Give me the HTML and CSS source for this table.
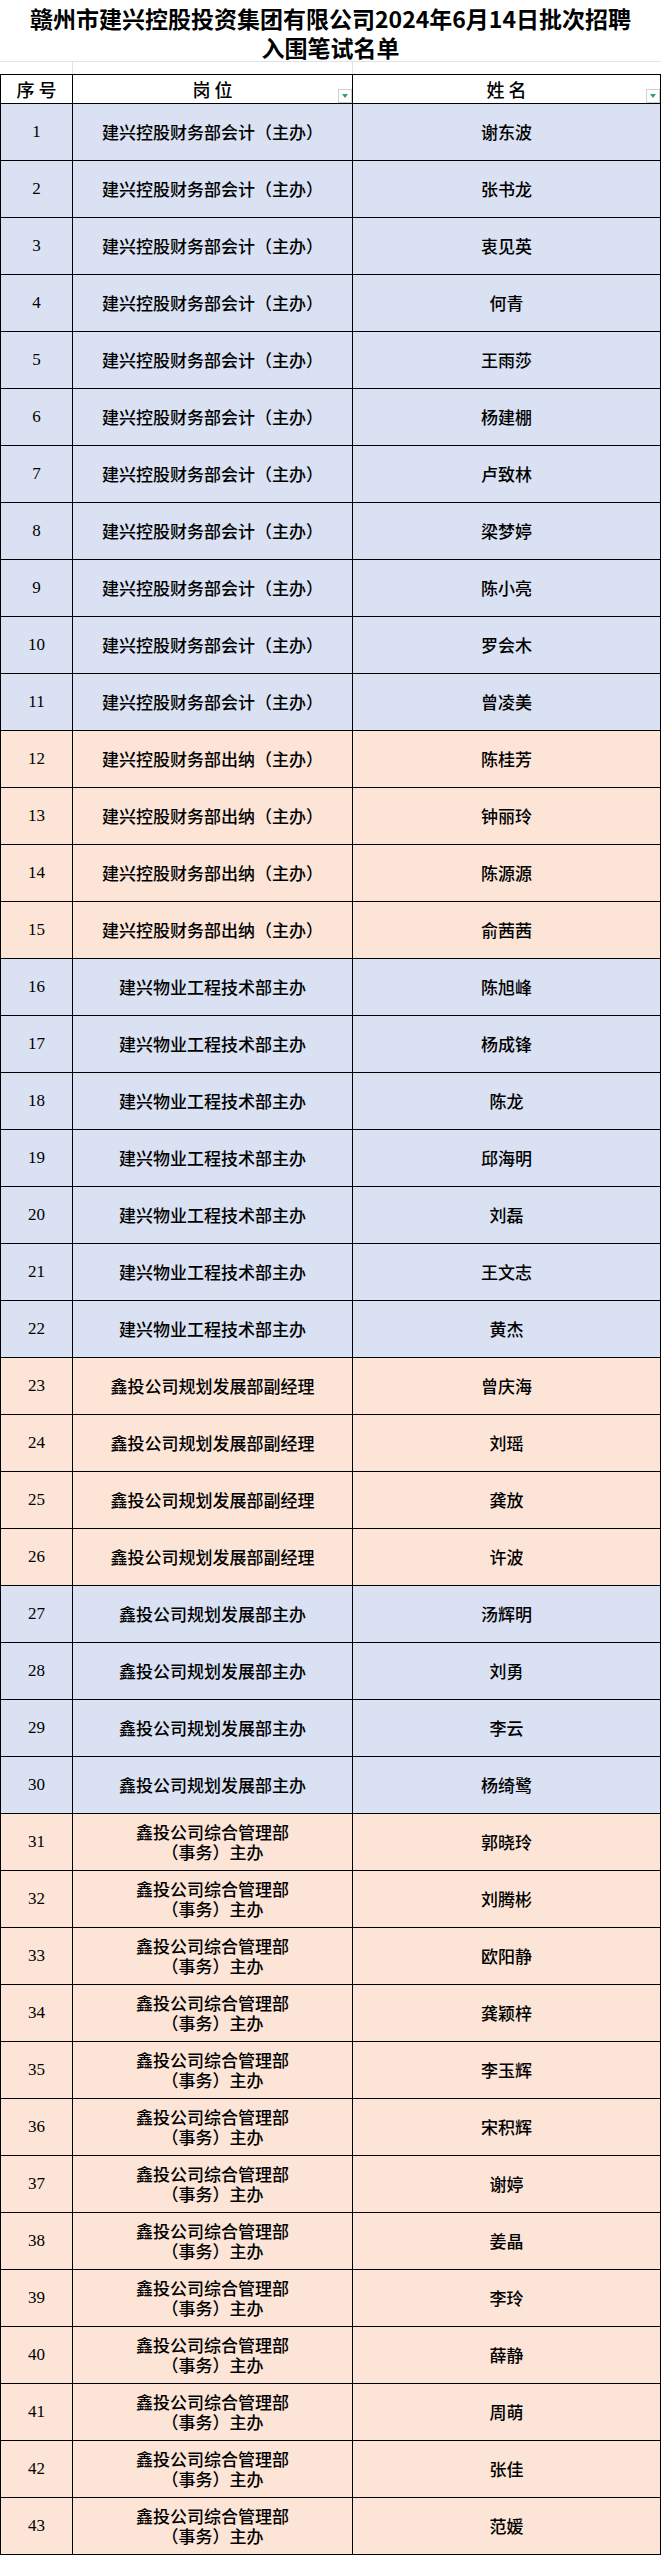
FILE: index.html
```html
<!DOCTYPE html>
<html lang="zh-CN">
<head>
<meta charset="utf-8">
<title>入围笔试名单</title>
<link rel="stylesheet" href="styles.css">
</head>
<body>
<div class="sheet">
  <div class="title">赣州市建兴控股投资集团有限公司2024年6月14日批次招聘<br>入围笔试名单</div>
  <div class="spacer"><div></div><div></div><div></div></div>
  <div class="row head">
    <div class="cell">序 号</div>
    <div class="cell">岗 位<span class="filter"></span></div>
    <div class="cell">姓 名<span class="filter"></span></div>
  </div>
  <div id="rows"></div>
</div>
<script src="app.js"></script>
</body>
</html>
```
FILE: styles.css
```css
html, body { margin: 0; padding: 0; background: #fff; }
.sheet { width: 661px; font-family: "Noto Sans CJK SC", sans-serif; color: #000; }
.title {
  height: 62px;
  box-sizing: border-box;
  padding-top: 4px;
  border-bottom: 1px solid #e3e3e3;
  text-align: center;
  font-weight: 700;
  font-size: 23px;
  line-height: 29px;
}
.spacer {
  display: grid;
  grid-template-columns: 73px 280px 308px;
  height: 12px;
}
.spacer div { border-right: 1px solid #e3e3e3; }
.spacer div:last-child { border-right: none; }
.row {
  display: grid;
  grid-template-columns: 73px 280px 308px;
  height: 57px;
}
.cell {
  box-sizing: border-box;
  border-right: 1px solid #000;
  border-bottom: 1px solid #000;
  display: flex;
  align-items: center;
  justify-content: center;
  text-align: center;
  font-size: 17px;
  line-height: 20px;
  font-weight: 500;
  position: relative;
}
.cell:first-child { border-left: 1px solid #000; }
.head { height: 30px; }
.head .cell { border-top: 1px solid #000; font-size: 18px; background: #fff; }
.num { font-family: "Liberation Serif", serif; font-size: 17px; }
.blue .cell { background: #d9e1f2; }
.peach .cell { background: #fce4d6; }
.filter {
  position: absolute;
  right: 0;
  bottom: 0;
  width: 14px;
  height: 14px;
  box-sizing: border-box;
  border: 1px solid #cfcfcf;
  background: #fff;
}
.filter::after {
  content: "";
  position: absolute;
  left: 3px;
  top: 4px;
  border-left: 3px solid transparent;
  border-right: 3px solid transparent;
  border-top: 4px solid #2f9d74;
}
```
FILE: app.js
```js
var groups = [
  ["建兴控股财务部会计（主办）", "blue", ["谢东波","张书龙","衷见英","何青","王雨莎","杨建棚","卢致林","梁梦婷","陈小亮","罗会木","曾凌美"]],
  ["建兴控股财务部出纳（主办）", "peach", ["陈桂芳","钟丽玲","陈源源","俞茜茜"]],
  ["建兴物业工程技术部主办", "blue", ["陈旭峰","杨成锋","陈龙","邱海明","刘磊","王文志","黄杰"]],
  ["鑫投公司规划发展部副经理", "peach", ["曾庆海","刘瑶","龚放","许波"]],
  ["鑫投公司规划发展部主办", "blue", ["汤辉明","刘勇","李云","杨绮鹭"]],
  ["鑫投公司综合管理部<br>（事务）主办", "peach", ["郭晓玲","刘腾彬","欧阳静","龚颖梓","李玉辉","宋积辉","谢婷","姜晶","李玲","薛静","周萌","张佳","范媛"]]
];
var html = "", n = 0;
groups.forEach(function (g) {
  g[2].forEach(function (name) {
    n++;
    html += '<div class="row ' + g[1] + '"><div class="cell num">' + n + '</div><div class="cell">' + g[0] + '</div><div class="cell">' + name + '</div></div>';
  });
});
document.getElementById("rows").innerHTML = html;
```
